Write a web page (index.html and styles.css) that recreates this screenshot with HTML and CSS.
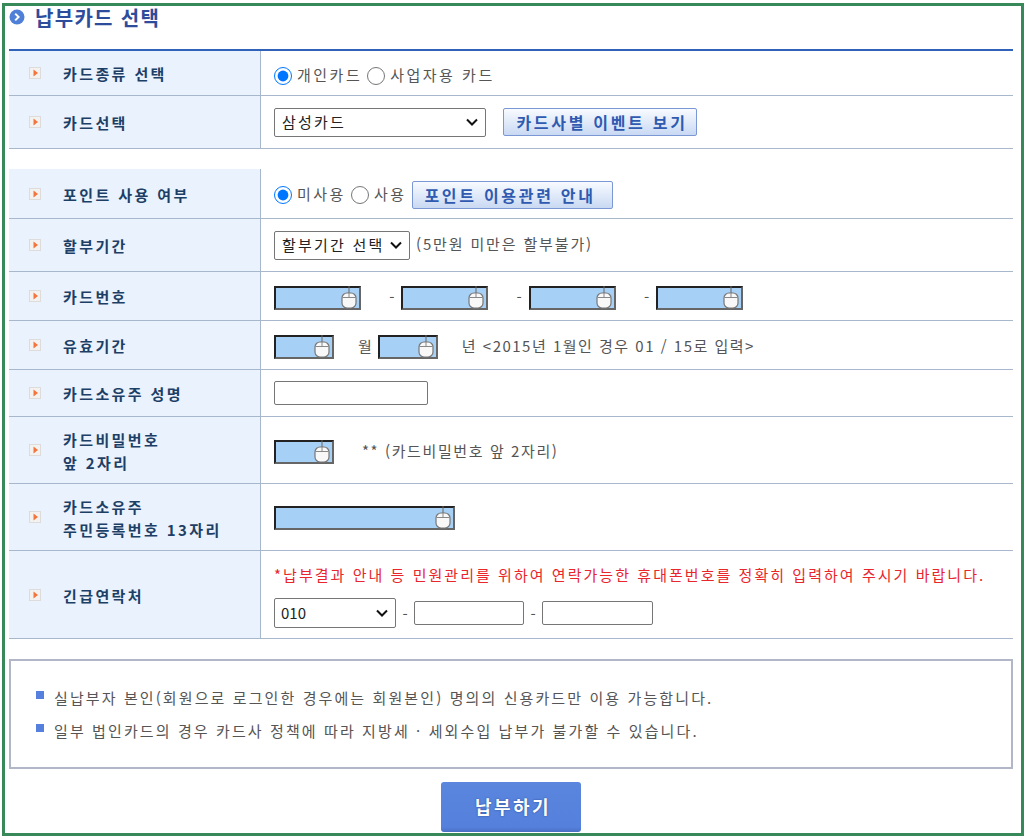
FILE: index.html
```html
<!DOCTYPE html>
<html lang="ko">
<head>
<meta charset="utf-8">
<title>납부카드 선택</title>
<link rel="stylesheet" href="styles.css">
</head>
<body>
<svg class="defs" width="0" height="0" aria-hidden="true">
  <defs>
    <symbol id="mouse" viewBox="0 0 16 23">
      <path d="M8 0V7" stroke="#666" stroke-width="1" fill="none"/>
      <rect x="1" y="7" width="14" height="15" rx="5" fill="#f8f8f8" stroke="#777" stroke-width="1.2"/>
      <path d="M1.5 11.5H14.5M8 7V11.5" stroke="#888" stroke-width="1" fill="none"/>
    </symbol>
    <symbol id="tick" viewBox="0 0 12 12">
      <rect width="12" height="12" fill="#dedcda"/>
      <rect x="1" y="1" width="10" height="10" fill="#f4f2f0"/>
      <path d="M4.5 2.5L9 6L4.5 9.5Z" fill="#f4743b"/>
    </symbol>
  </defs>
</svg>
<main class="frame">
  <h1 class="title">
    <svg class="title-icon" viewBox="0 0 16 16"><circle cx="8" cy="8" r="7.5" fill="#4f7fd6"/><path d="M6.2 4.6L9.6 8L6.2 11.4" stroke="#fff" stroke-width="2" fill="none"/></svg>
    <span class="title-text">납부카드 선택</span>
  </h1>

  <section class="group group-first">
    <div class="row h-row1">
      <div class="label"><svg class="tick"><use href="#tick"/></svg><span>카드종류 선택</span></div>
      <div class="value value-r1">
        <label class="opt"><input type="radio" name="kind" checked><span class="opt-text">개인카드</span></label>
        <label class="opt"><input type="radio" name="kind"><span class="opt-text">사업자용 카드</span></label>
      </div>
    </div>
    <div class="row h-row2">
      <div class="label"><svg class="tick"><use href="#tick"/></svg><span>카드선택</span></div>
      <div class="value">
        <select class="sel sel-card"><option>삼성카드</option></select>
        <button class="btn btn-event" type="button">카드사별 이벤트 보기</button>
      </div>
    </div>
  </section>

  <section class="group">
    <div class="row h-row3">
      <div class="label"><svg class="tick"><use href="#tick"/></svg><span>포인트 사용 여부</span></div>
      <div class="value value-r3">
        <label class="opt"><input type="radio" name="pt" checked><span class="opt-text">미사용</span></label>
        <label class="opt"><input type="radio" name="pt"><span class="opt-text">사용</span></label>
        <button class="btn btn-point" type="button">포인트 이용관련 안내</button>
      </div>
    </div>
    <div class="row h-row4">
      <div class="label"><svg class="tick"><use href="#tick"/></svg><span>할부기간</span></div>
      <div class="value">
        <select class="sel sel-term"><option>할부기간 선택</option></select>
        <span class="note note-term">(5만원 미만은 할부불가)</span>
      </div>
    </div>
    <div class="row h-row5">
      <div class="label"><svg class="tick"><use href="#tick"/></svg><span>카드번호</span></div>
      <div class="value value-card">
        <span class="sec w87"><input class="sec-in" type="text"><svg class="mouse"><use href="#mouse"/></svg></span>
        <span class="dash">-</span>
        <span class="sec w87"><input class="sec-in" type="text"><svg class="mouse"><use href="#mouse"/></svg></span>
        <span class="dash">-</span>
        <span class="sec w87"><input class="sec-in" type="text"><svg class="mouse"><use href="#mouse"/></svg></span>
        <span class="dash">-</span>
        <span class="sec w87"><input class="sec-in" type="text"><svg class="mouse"><use href="#mouse"/></svg></span>
      </div>
    </div>
    <div class="row h-row5">
      <div class="label"><svg class="tick"><use href="#tick"/></svg><span>유효기간</span></div>
      <div class="value">
        <span class="sec w60"><input class="sec-in" type="text"><svg class="mouse"><use href="#mouse"/></svg></span>
        <span class="note note-month">월</span>
        <span class="sec w60"><input class="sec-in" type="text"><svg class="mouse"><use href="#mouse"/></svg></span>
        <span class="note note-year">년 &lt;2015년 1월인 경우 01 / 15로 입력&gt;</span>
      </div>
    </div>
    <div class="row h-row6">
      <div class="label"><svg class="tick"><use href="#tick"/></svg><span>카드소유주 성명</span></div>
      <div class="value"><input class="txt w154" type="text"></div>
    </div>
    <div class="row h-row7">
      <div class="label"><svg class="tick"><use href="#tick"/></svg><span>카드비밀번호<br>앞 2자리</span></div>
      <div class="value">
        <span class="sec w60"><input class="sec-in" type="text"><svg class="mouse"><use href="#mouse"/></svg></span>
        <span class="note note-pw">** (카드비밀번호 앞 2자리)</span>
      </div>
    </div>
    <div class="row h-row7">
      <div class="label"><svg class="tick"><use href="#tick"/></svg><span>카드소유주<br>주민등록번호 13자리</span></div>
      <div class="value">
        <span class="sec sec-ssn w181"><input class="sec-in" type="text"><svg class="mouse"><use href="#mouse"/></svg></span>
      </div>
    </div>
    <div class="row h-row8">
      <div class="label"><svg class="tick"><use href="#tick"/></svg><span>긴급연락처</span></div>
      <div class="value value-col">
        <p class="warn">*납부결과 안내 등 민원관리를 위하여 연락가능한 휴대폰번호를 정확히 입력하여 주시기 바랍니다.</p>
        <div class="phone">
          <select class="sel sel-phone"><option>010</option></select>
          <span class="pdash">-</span>
          <input class="txt w110" type="text">
          <span class="pdash">-</span>
          <input class="txt w111" type="text">
        </div>
      </div>
    </div>
  </section>

  <ul class="notice">
    <li>실납부자 본인(회원으로 로그인한 경우에는 회원본인) 명의의 신용카드만 이용 가능합니다.</li>
    <li>일부 법인카드의 경우 카드사 정책에 따라 지방세 · 세외수입 납부가 불가할 수 있습니다.</li>
  </ul>

  <div class="submit-wrap"><button class="submit" type="button">납부하기</button></div>
</main>
</body>
</html>
```
FILE: styles.css
```css
* { box-sizing: border-box; }
html, body { margin: 0; padding: 0; background: #fff; }
body {
  font-family: "Noto Sans CJK KR", "Noto Sans", sans-serif;
  font-size: 15px;
  color: #555;
  overflow: hidden;
}
.defs { display: block; height: 0; }
.frame {
  width: 1022px;
  height: 833px;
  margin: 3px 0 0 2px;
  border: 3px solid #38895a;
  padding: 0 8px 0 4px;
  overflow: hidden;
}
.title {
  display: flex;
  align-items: flex-start;
  gap: 10px;
  height: 45px;
  margin: 0;
  font-size: 20px;
  font-weight: 700;
  line-height: 22px;
  letter-spacing: 1.3px;
  color: #2d4c9c;
  border-bottom: 2px solid #2f62b8;
}
.title-text { padding-top: 1px; }
.title-icon { width: 16px; height: 16px; margin-top: 3px; flex: none; }
.group-first { margin-bottom: 20px; }
.row {
  display: grid;
  grid-template-columns: 252px 1fr;
  border-bottom: 1px solid #a8b8cc;
}
.h-row1 { height: 45px; }
.h-row2 { height: 53px; }
.h-row3 { height: 50px; }
.h-row4 { height: 53px; }
.h-row5 { height: 49px; }
.h-row6 { height: 47px; }
.h-row7 { height: 67px; }
.h-row8 { height: 88px; }
.label {
  display: flex;
  align-items: center;
  padding-left: 20px;
  background: #e9f2fd;
  border-right: 1px solid #a8b8cc;
  font-weight: 700;
  font-size: 15px;
  line-height: 23px;
  letter-spacing: 2.4px;
  color: #1d3f66;
}
.label span { padding-top: 1px; }
.tick { width: 12px; height: 12px; margin: 0 22px 0 0; flex: none; }
.value {
  display: flex;
  align-items: center;
  padding-left: 13px;
  letter-spacing: 2.5px;
}
.value-r1 { padding-top: 5px; }
.value-r3 { padding-top: 2px; }
.value-col { flex-direction: column; align-items: flex-start; justify-content: flex-start; }
.opt { display: inline-flex; align-items: center; margin-right: 5px; }
.opt input { width: 18px; height: 18px; margin: 0 5px 0 0; flex: none; }
.opt-text { margin-top: -2px; }
.sel {
  appearance: none;
  height: 29px;
  font: inherit;
  letter-spacing: 2.2px;
  color: #222;
  background: #fff url("data:image/svg+xml,%3Csvg xmlns='http://www.w3.org/2000/svg' width='14' height='10'%3E%3Cpath d='M2 2.5L7 7.5L12 2.5' stroke='%23111' stroke-width='2' fill='none'/%3E%3C/svg%3E") no-repeat right 6px center;
  border: 1px solid #767676;
  border-radius: 2px;
  padding: 0 0 2px 7px;
}
.sel-card { width: 212px; }
.sel-term { width: 136px; }
.sel-phone { width: 122px; height: 30px; letter-spacing: 0; padding: 0 0 2px 6px; }
.btn {
  height: 28px;
  padding: 0;
  font: inherit;
  font-weight: 700;
  font-size: 16px;
  letter-spacing: 2.7px;
  color: #2f5ab0;
  background: linear-gradient(#f8fbff, #c9d9f3);
  border: 1px solid #7c98d4;
  border-radius: 2px;
}
.btn-event { width: 194px; margin-left: 17px; padding-left: 4px; }
.btn-point { width: 201px; padding-right: 4px; }
.note { color: #555; }
.note-term { margin: 0 0 4px 6px; letter-spacing: 1.85px; }
.note-month { margin: 0 6px 0 24px; letter-spacing: 0; }
.note-year { margin-left: 24px; letter-spacing: 1.5px; }
.note-pw { margin-left: 28px; letter-spacing: 1.6px; }
.sec { position: relative; display: block; height: 24px; margin-top: 3px; flex: none; }
.sec-ssn { margin-top: 1px; }
.w87 { width: 87px; }
.w60 { width: 60px; }
.w181 { width: 181px; }
.sec-in {
  display: block;
  width: 100%;
  height: 100%;
  padding: 0;
  background: #a7d0f6;
  border: 2px solid;
  border-color: #222 #666 #666 #222;
}
.mouse { position: absolute; right: 4px; top: 0; width: 16px; height: 23px; }
.dash { width: 40.4px; padding-right: 7px; text-align: right; letter-spacing: 0; }
.txt {
  height: 24px;
  padding: 0 4px;
  background: #fff;
  border: 1px solid #767676;
  border-radius: 2px;
}
.w154 { width: 154px; }
.w110 { width: 110px; }
.w111 { width: 111px; }
.warn {
  margin: 13px 0 0;
  height: 22px;
  line-height: 22px;
  color: #e8262c;
  letter-spacing: 2.04px;
  white-space: nowrap;
}
.phone { display: flex; align-items: center; margin-top: 12px; }
.pdash { width: 18px; text-align: center; letter-spacing: 0; }
.notice {
  list-style: none;
  height: 110px;
  margin: 20px 0 0;
  padding: 20px 0 0 25px;
  border: 2px solid #b1b7c6;
  letter-spacing: 2.1px;
  line-height: 33px;
}
.notice li { position: relative; padding-left: 18px; }
.notice li::before {
  content: "";
  position: absolute;
  left: 0;
  top: 10px;
  width: 8px;
  height: 8px;
  background: #5580dd;
}
.submit-wrap { display: flex; justify-content: center; margin-top: 13px; }
.submit {
  width: 140px;
  height: 50px;
  padding: 0 0 3px 4px;
  font: inherit;
  font-size: 18px;
  font-weight: 700;
  letter-spacing: 2.5px;
  color: #fff;
  background: linear-gradient(#5a86de 0, #5580dc 90%, #4a70c4 100%);
  border: 0;
  border-radius: 3px;
  text-shadow: 0 0 2px #2a4a90;
}
```
